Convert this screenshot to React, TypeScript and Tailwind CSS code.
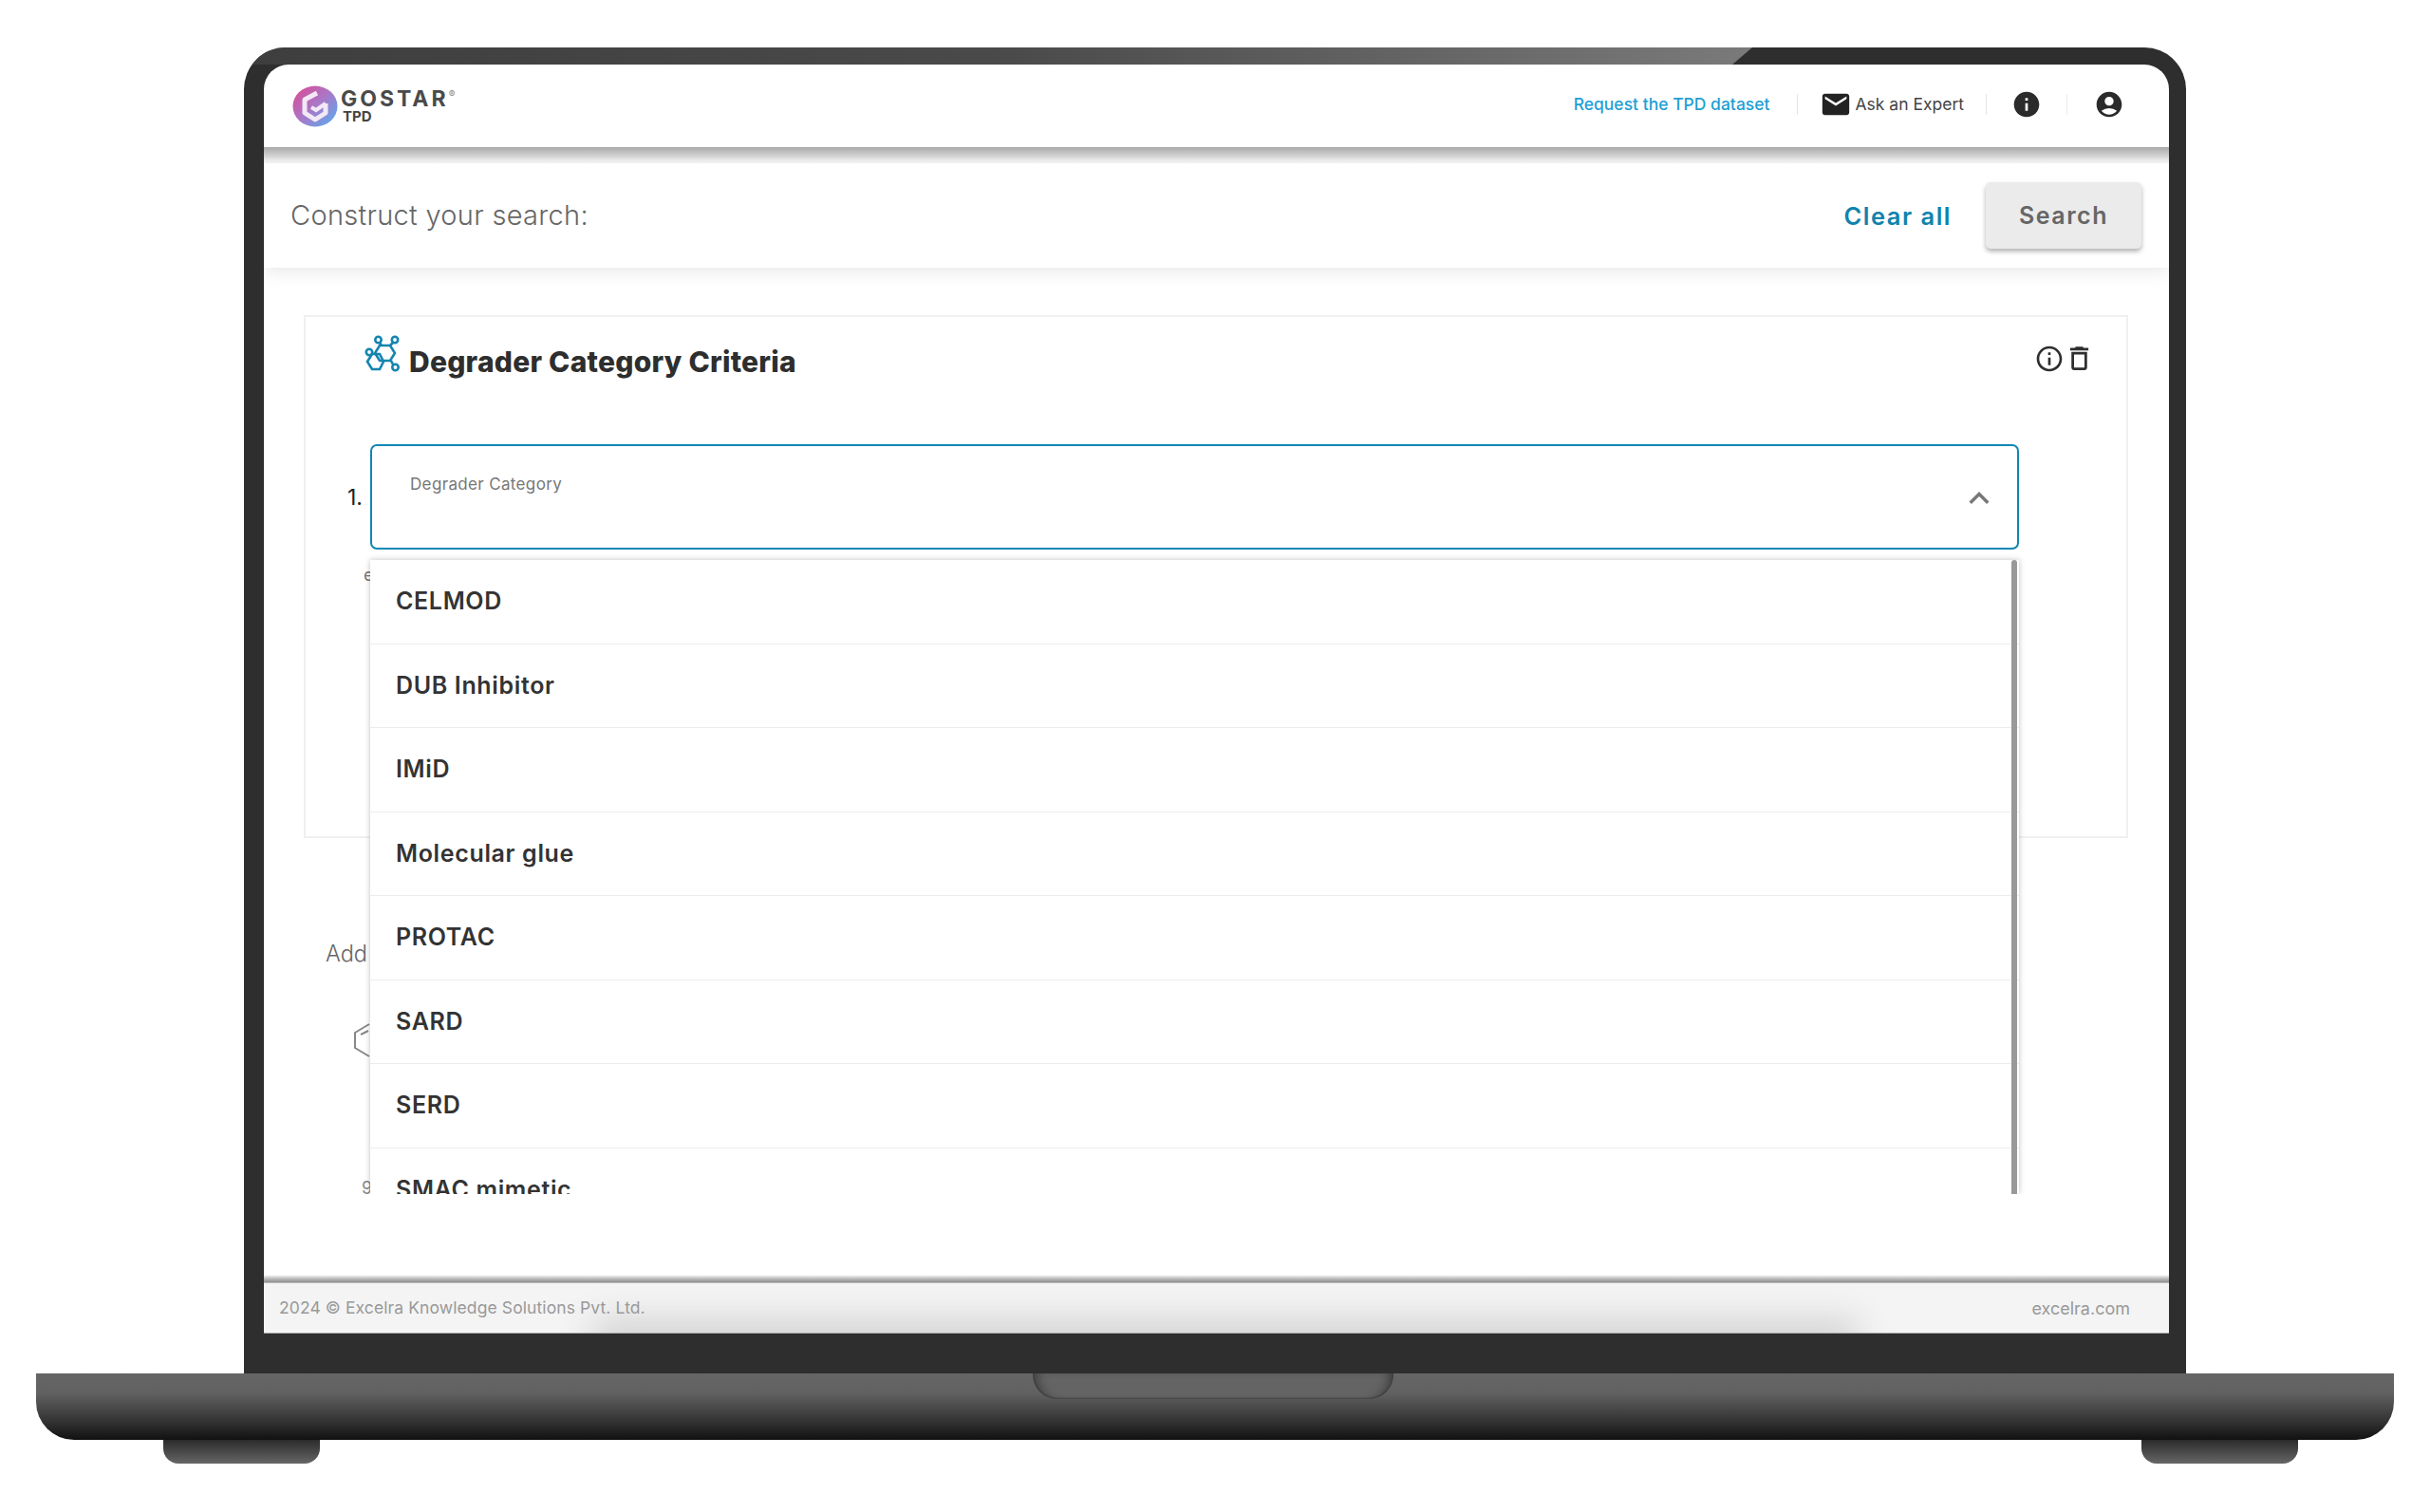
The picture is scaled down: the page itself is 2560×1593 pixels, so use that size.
import { MdAccountCircle, MdEmail, MdExpandLess, MdInfo, MdInfoOutline, MdOutlineDelete } from 'react-icons/md';

const categories = ['CELMOD', 'DUB Inhibitor', 'IMiD', 'Molecular glue', 'PROTAC', 'SARD', 'SERD', 'SMAC mimetic'];

function Logo() {
  return (
    <svg width="48" height="44" viewBox="0 0 48 44" className="shrink-0">
      <defs>
        <linearGradient id="logo-grad" x1="0.1" y1="0.1" x2="0.9" y2="0.9">
          <stop offset="0" stopColor="#d5509a" />
          <stop offset="0.5" stopColor="#a878c8" />
          <stop offset="1" stopColor="#62a6ea" />
        </linearGradient>
      </defs>
      <ellipse cx="24" cy="22" rx="23.5" ry="21.5" fill="url(#logo-grad)" />
      <path d="M26 8 L13 15 V29 L24 36 L35 29 V19" fill="none" stroke="#f3e8f6" strokeWidth="5" strokeLinejoin="round" />
      <path d="M20 23 L25 26 L35 19" fill="none" stroke="#f3e8f6" strokeWidth="4" />
    </svg>
  );
}

function MoleculeIcon() {
  return (
    <svg width="38" height="39" viewBox="0 0 38 39" fill="none" stroke="#1585b0" strokeWidth="2.6" className="shrink-0">
      <path d="M17 11 H28 L33 19 L28 27 H17 L12 19 Z" />
      <path d="M4 28 L9 20 H17 L21 28 L17 36 H9 Z" />
      <circle cx="15.5" cy="5" r="3.2" />
      <circle cx="33" cy="5" r="3.2" />
      <circle cx="6" cy="18" r="3.2" fill="#fff" />
      <circle cx="33.5" cy="34" r="3.2" />
      <path d="M17 8 L19 11 M31 8 L28 11 M29 27 L31 31" />
    </svg>
  );
}

export default function App() {
  return (
    <div className="w-[2560px] h-[1593px] bg-white overflow-hidden flex flex-col items-center pt-[50px] font-['Inter',sans-serif]">
      {/* Lid */}
      <div className="relative w-[2046px] h-[1397px] shrink-0 rounded-t-[44px] overflow-hidden bg-[#2e2e2e] pl-[21px] pr-[18px] pt-[18px] pb-[42px]">
        <div className="absolute top-0 left-[6px] w-[1583px] h-[18px] rounded-tl-[40px] bg-[linear-gradient(90deg,#3e3e3e_0%,#4a4a4a_50%,#7a7a7a_100%)] [clip-path:polygon(0_0,100%_0,calc(100%-21px)_100%,0_100%)]" />

        {/* Screen */}
        <div className="relative h-full rounded-t-[26px] overflow-hidden bg-white flex flex-col">
          {/* Header */}
          <header className="h-[87px] shrink-0 flex items-center pl-[30px] pr-[47px]">
            <Logo />
            <div className="ml-[3px] flex flex-col">
              <div className="flex items-start">
                <span className="text-[23px] leading-[22px] font-bold tracking-[3px] text-[#4a4a4a]">GOSTAR</span>
                <span className="text-[10px] leading-[12px] text-[#888]">®</span>
              </div>
              <span className="ml-[2px] text-[15px] leading-[15px] font-bold text-[#444]">TPD</span>
            </div>
            <div className="ml-auto pb-[3px] flex items-center">
              <a className="text-[17.5px] font-medium text-[#1ea0d5]">Request the TPD dataset</a>
              <div className="ml-[29px] mr-[26px] w-px h-[22px] bg-[#e5e5e5]" />
              <MdEmail size={34} className="-mx-[3px] text-[#222]" />
              <span className="ml-[6px] text-[17.5px] text-[#444]">Ask an Expert</span>
              <div className="ml-[23px] mr-[26px] w-px h-[22px] bg-[#e5e5e5]" />
              <MdInfo size={32} className="text-[#2b2b2b]" />
              <div className="ml-[26px] mr-[28px] w-px h-[22px] bg-[#ececec]" />
              <MdAccountCircle size={32} className="text-[#2b2b2b]" />
            </div>
          </header>
          <div className="h-[17px] shrink-0 bg-[linear-gradient(180deg,#a9a9a9_0%,#d2d2d2_55%,#ececec_80%,#f6f6f6_100%)]" />

          {/* Toolbar */}
          <div className="relative z-10 h-[110px] shrink-0 bg-white flex items-center pl-[28px] pr-[29px] shadow-[0_6px_16px_rgba(0,0,0,0.08)]">
            <h2 className="text-[29px] font-light tracking-[0.3px] text-[#666]">Construct your search:</h2>
            <button className="ml-auto pt-[2px] text-[25.5px] font-semibold tracking-[1.5px] text-[#0f83ad]">Clear all</button>
            <button className="ml-[36px] w-[164px] h-[70px] pt-[2px] rounded-[5px] bg-[#ebebeb] text-[25px] font-semibold tracking-[1.5px] text-[#666] shadow-[0_3px_5px_rgba(0,0,0,0.3)]">
              Search
            </button>
          </div>

          {/* Main */}
          <main className="flex-1 min-h-0 pt-[50px] pl-[42px] pr-[43px]">
            <section className="h-[551px] border-2 border-[#f0f0f0] flex flex-col">
              <div className="flex items-start pt-[19px] pl-[61px] pr-[33px]">
                <MoleculeIcon />
                <h3 className="ml-[10px] mt-[10px] text-[30px] leading-[36px] font-extrabold tracking-[0.25px] text-[#2e2e2e]">Degrader Category Criteria</h3>
                <div className="ml-auto mt-[8px] flex items-center">
                  <MdInfoOutline size={32} className="text-[#2e2e2e]" />
                  <MdOutlineDelete size={33} className="-ml-[1px] text-[#2e2e2e]" />
                </div>
              </div>

              <div className="mt-[69px] flex items-center pl-[44px] pr-[113px]">
                <span className="w-[24px] shrink-0 pt-[2px] text-[23px] text-[#222]">1.</span>
                <div className="relative flex-1">
                  <div className="h-[111px] rounded-[7px] border-2 border-[#0f87b5] bg-white flex items-start justify-between pl-[40px] pr-[19px]">
                    <span className="mt-[29px] text-[17px] leading-[22px] tracking-[0.35px] text-[#777]">Degrader Category</span>
                    <MdExpandLess size={42} className="mt-[34px] text-[#777]" />
                  </div>
                  {/* Open list */}
                  <div className="absolute z-20 top-[122px] left-0 right-0 h-[668px] overflow-hidden bg-white shadow-[0_0_6px_rgba(0,0,0,0.25)] [clip-path:inset(-8px_-8px_0_-8px)]">
                    {categories.map((c) => (
                      <div key={c} className="h-[88.5px] flex items-center pl-[27px] border-b border-[#ececec] text-[25px] font-semibold tracking-[0.65px] text-[#333]">
                        {c}
                      </div>
                    ))}
                    <div className="absolute top-0 right-[2px] bottom-0 w-[6px] rounded-t-[3px] bg-[#999]" />
                  </div>
                </div>
              </div>

              <span className="mt-[15px] pl-[61px] text-[18px] leading-[24px] text-[#777]">e</span>
            </section>

            <div className="mt-[108px] pl-[23px] text-[23.5px] leading-[28px] font-light text-[#666]">Add</div>
            <svg width="24" height="38" viewBox="0 0 24 38" fill="none" stroke="#888" strokeWidth="2" className="ml-[52px] mt-[58px]">
              <path d="M17 2 L2 11 V27 L17 36" />
              <path d="M8 13 L16 9" />
            </svg>
            <div className="mt-[127px] ml-[61px] text-[18px] leading-[20px] text-[#888]">9</div>
          </main>

          {/* Footer */}
          <div className="h-[8px] shrink-0 bg-[linear-gradient(180deg,#fff_0%,#bdbdbd_50%,#8f8f8f_100%)]" />
          <footer className="relative h-[54px] shrink-0 overflow-hidden bg-[#f4f4f4] flex items-center justify-between pl-[16px] pr-[41px] border-y border-t-[#bbb] border-b-[#aaa]">
            <div className="absolute -bottom-[14px] left-[360px] w-[1305px] h-[14px] shadow-[0_0_36px_14px_#d2d2d2]" />
            <span className="relative text-[17.5px] tracking-[0.1px] text-[#999]">2024 © Excelra Knowledge Solutions Pvt. Ltd.</span>
            <span className="relative text-[18px] text-[#999]">excelra.com</span>
          </footer>
        </div>
      </div>

      {/* Base */}
      <div className="w-[2484px] h-[70px] shrink-0 rounded-b-[40px] bg-[linear-gradient(180deg,#666_0%,#616161_30%,#333_72%,#111_100%)] flex justify-center">
        <div className="w-[380px] h-[27px] mr-[4px] rounded-b-[26px] bg-[#646464] shadow-[inset_0_-1px_2px_rgba(0,0,0,0.3),inset_12px_0_12px_-8px_rgba(0,0,0,0.4),inset_-12px_0_12px_-8px_rgba(0,0,0,0.4)]" />
      </div>
      <div className="w-[2484px] flex justify-between pl-[134px] pr-[101px]">
        <div className="w-[165px] h-[25px] rounded-b-[16px] bg-[linear-gradient(180deg,#2b2b2b,#666)]" />
        <div className="w-[165px] h-[25px] rounded-b-[16px] bg-[linear-gradient(180deg,#2b2b2b,#666)]" />
      </div>
    </div>
  );
}
